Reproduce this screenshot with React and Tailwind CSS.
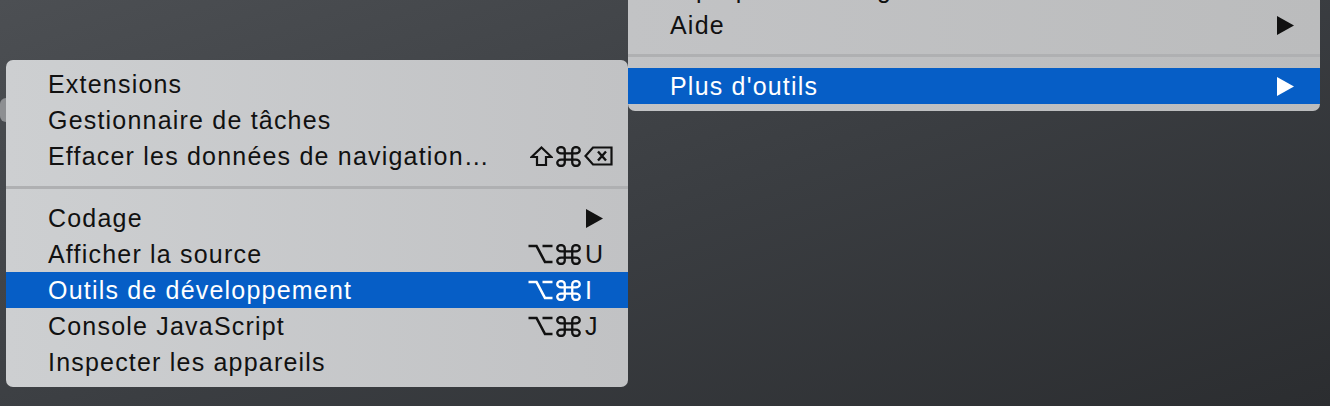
import React from "react";

const FONT = { fontFamily: '"Liberation Sans", Arial, sans-serif' };

function Arrow({ color = "#111" }) {
  return (
    <svg width="17" height="19" viewBox="0 0 17 19" className="block">
      <path d="M0 0 L17 9.5 L0 19 Z" fill={color} />
    </svg>
  );
}

function Cmd({ c }) {
  return (
    <svg width="25" height="21" viewBox="2 2 20 20" preserveAspectRatio="none" className="block">
      <path
        d="M15 6v12a3 3 0 1 0 3-3H6a3 3 0 1 0 3 3V6a3 3 0 1 0-3 3h12a3 3 0 1 0-3-3"
        fill="none"
        stroke={c}
        strokeWidth="2.3"
        vectorEffect="non-scaling-stroke"
      />
    </svg>
  );
}

function Opt({ c }) {
  return (
    <svg width="25" height="20" viewBox="0 0 25 20" className="block">
      <path d="M0.5 2 H8.5 L17 18 H24.5 M14.5 2 H24.5" fill="none" stroke={c} strokeWidth="2.6" />
    </svg>
  );
}

function Shift({ c }) {
  return (
    <svg width="23" height="20" viewBox="0 0 23 20" className="block">
      <path d="M11.5 1.5 L21.5 11 H16 V19 H7 V11 H1.5 Z" fill="none" stroke={c} strokeWidth="2.2" strokeLinejoin="miter" />
    </svg>
  );
}

function Del({ c }) {
  return (
    <svg width="29" height="20" viewBox="0 0 29 20" className="block">
      <path d="M1.5 10 L9 1.5 H27.5 V18.5 H9 Z" fill="none" stroke={c} strokeWidth="2.2" />
      <path d="M14 5.5 L22 14.5 M22 5.5 L14 14.5" fill="none" stroke={c} strokeWidth="2.4" />
    </svg>
  );
}

function Row({ label, mods, keyChar, arrow, del, active }) {
  const c = active ? "#ffffff" : "#111111";
  return (
    <div
      className={`flex items-center h-[36px] pl-[42px] pr-[14px] ${
        active ? "bg-[#065ec6] text-white" : "text-[#111]"
      }`}
    >
      <span className="flex-1 text-[25px] leading-[36px] tracking-[1.2px] whitespace-nowrap" style={FONT}>
        {label}
      </span>
      <span className="flex items-center justify-end gap-[3px] mr-[2px]">
        {mods === "opt" && (
          <>
            <Opt c={c} />
            <Cmd c={c} />
          </>
        )}
        {mods === "shift" && (
          <>
            <Shift c={c} />
            <Cmd c={c} />
          </>
        )}
      </span>
      <span className="w-[31px] flex items-center text-[25px] leading-[36px]" style={FONT}>
        {arrow ? (
          <span className="ml-[3px]">
            <Arrow color={c} />
          </span>
        ) : del ? (
          <span className="ml-[1px]">
            <Del c={c} />
          </span>
        ) : (
          <span className="ml-[2px]">{keyChar}</span>
        )}
      </span>
    </div>
  );
}

function Sep({ top, bottom }) {
  return (
    <div className={`${top} ${bottom}`}>
      <div className="h-[3px] bg-[#afb0b2]" />
    </div>
  );
}

export default function App() {
  return (
    <div className="relative w-[1330px] h-[406px] overflow-hidden flex items-start bg-[linear-gradient(160deg,#4c4f53_0%,#3b3e42_50%,#2b2d30_100%)]">
      <div className="absolute left-0 top-[98px] w-[12px] h-[24px] rounded-full bg-[#8d8f92]" />
      {/* Left submenu */}
      <div className="relative ml-[6px] mt-[60px] w-[622px] rounded-[7px] pt-[6px] pb-[7px] bg-[linear-gradient(90deg,#cdcfd1,#c1c2c4)] overflow-hidden">
        <Row label="Extensions" />
        <Row label="Gestionnaire de tâches" />
        <Row label="Effacer les données de navigation…" mods="shift" del />
        <Sep top="pt-[12px]" bottom="pb-[11px]" />
        <Row label="Codage" arrow />
        <Row label="Afficher la source" mods="opt" keyChar="U" />
        <Row label="Outils de développement" mods="opt" keyChar="I" active />
        <Row label="Console JavaScript" mods="opt" keyChar="J" />
        <Row label="Inspecter les appareils" />
      </div>
      {/* Right main menu */}
      <div className="w-[692px] mt-[-29px] rounded-b-[7px] pb-[7px] bg-[linear-gradient(90deg,#c2c3c5,#bbbcbd)] overflow-hidden">
        <div className="flex items-center h-[36px] pl-[42px] pr-[26px] text-[#111]">
          <span className="flex-1 text-[25px] leading-[36px] tracking-[1.2px]" style={FONT}>À propos de Google Chrome</span>
        </div>
        <div className="flex items-center h-[36px] pl-[42px] pr-[26px] text-[#111]">
          <span className="flex-1 text-[25px] leading-[36px] tracking-[1.2px]" style={FONT}>Aide</span>
          <Arrow color="#111" />
        </div>
        <Sep top="pt-[11px]" bottom="pb-[11px]" />
        <div className="flex items-center h-[36px] pl-[42px] pr-[26px] text-white bg-[#065ec6]">
          <span className="flex-1 text-[25px] leading-[36px] tracking-[1.2px]" style={FONT}>Plus d'outils</span>
          <Arrow color="#fff" />
        </div>
      </div>
    </div>
  );
}
